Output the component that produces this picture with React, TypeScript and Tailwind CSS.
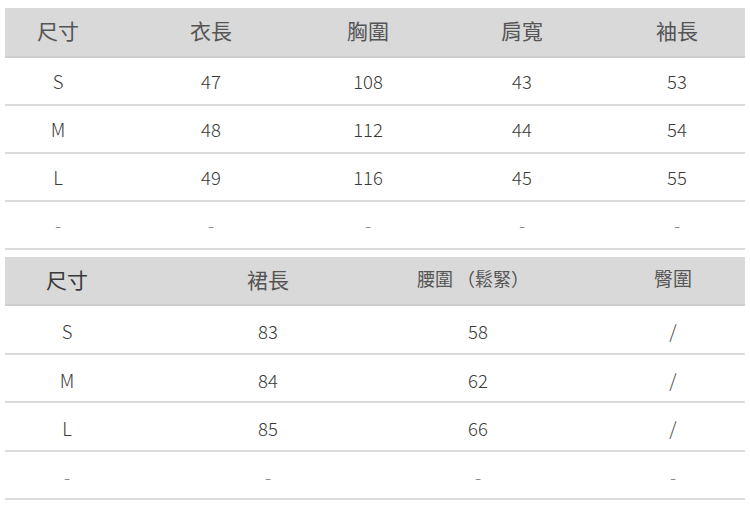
const font = { fontFamily: '"Noto Sans CJK TC", "Noto Sans", sans-serif' };

const top = {
  cols: "grid-cols-[106px_200px_114px_194px_1fr]",
  head: ["尺寸", "衣長", "胸圍", "肩寬", "袖長"],
  rows: [
    ["S", "47", "108", "43", "53"],
    ["M", "48", "112", "44", "54"],
    ["L", "49", "116", "45", "55"],
    ["-", "-", "-", "-", "-"],
  ],
};

const bottom = {
  cols: "grid-cols-[124px_278px_142px_1fr]",
  rows: [
    ["S", "83", "58", "/"],
    ["M", "84", "62", "/"],
    ["L", "85", "66", "/"],
    ["-", "-", "-", "-"],
  ],
};

function Cell({ v, last }: { v: string; last?: boolean }) {
  return (
    <div
      className={`flex items-center justify-center pt-[2px] ${last ? "pr-[10px]" : ""} ${
        v === "-" ? "text-[#888]" : "text-[#3a3a3a]"
      }`}
    >
      {v}
    </div>
  );
}

export default function App() {
  return (
    <div
      className="w-[750px] h-[508px] bg-white px-[5px] pt-[8px] font-light text-[18.5px] overflow-hidden"
      style={font}
    >
      <div
        className={`grid ${top.cols} h-[50px] bg-[#d9d9d9] border-b-2 border-[#cfcfcf] text-[21px] text-[#555] font-normal`}
      >
        {top.head.map((h, i) => (
          <div
            key={i}
            className={`flex items-center justify-center pb-[2px] ${i === 4 ? "pr-[10px]" : ""}`}
          >
            {h}
          </div>
        ))}
      </div>
      {top.rows.map((r, i) => (
        <div key={i} className={`grid ${top.cols} h-[48px] border-b-2 border-[#dcdcdc]`}>
          {r.map((v, j) => (
            <Cell key={j} v={v} last={j === 4} />
          ))}
        </div>
      ))}

      <div
        className={`mt-[7px] grid ${bottom.cols} h-[49px] bg-[#d9d9d9] border-b-2 border-[#cfcfcf] text-[#555] font-normal`}
      >
        <div className="flex items-center justify-center text-[21px] text-[#3a3a3a] pb-[2px]">尺寸</div>
        <div className="flex items-center justify-center text-[21px] pb-[2px]">裙長</div>
        <div className="flex items-center justify-center text-[18px] whitespace-nowrap pb-[4px] pr-[10px]">
          腰圍 （鬆緊）
        </div>
        <div className="flex items-center justify-center text-[19px] pl-[52px] pb-[4px]">臀圍</div>
      </div>
      {bottom.rows.map((r, i) => (
        <div key={i} className={`grid ${bottom.cols} h-[48.5px] border-b-2 border-[#dcdcdc]`}>
          {r.map((v, j) => (
            <div
              key={j}
              className={`flex items-center justify-center pt-[6px] ${j === 3 ? "pl-[52px]" : ""} ${
                v === "-" ? "text-[#888]" : "text-[#3a3a3a]"
              }`}
            >
              {v}
            </div>
          ))}
        </div>
      ))}
    </div>
  );
}
